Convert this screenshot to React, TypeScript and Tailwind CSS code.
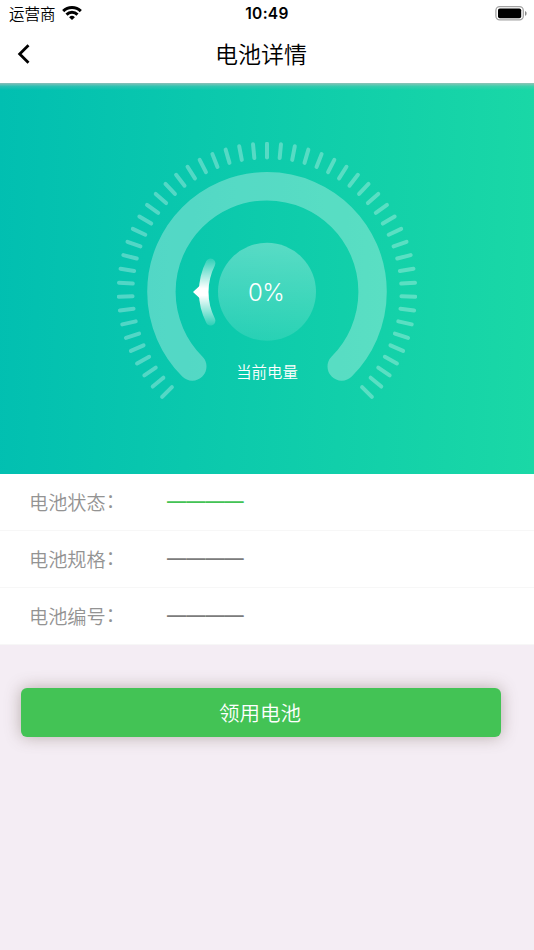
const CENTER = 150;

// 51 marks spread over 270 degrees, open at the bottom
const ticks = Array.from({ length: 51 }, (_, i) => (i - 25) * 5.4);

const rows = [
  { label: "电池状态", value: "————", color: "text-[#43c355]" },
  { label: "电池规格", value: "————", color: "text-[#7c7c7c]" },
  { label: "电池编号", value: "————", color: "text-[#7c7c7c]" },
];

function StatusBar() {
  return (
    <div className="grid h-[27px] grid-cols-3 items-center pl-[9px] pr-[7px]">
      <div className="flex items-center gap-[6px]">
        <span className="text-[15.5px] font-[350] leading-none">运营商</span>
        <svg width="20" height="15" viewBox="0 0 20 15" fill="none" stroke="#000" strokeWidth="3">
          <path d="M1.2 5.1a12.6 12.6 0 0 1 17.6 0" />
          <path d="M4.5 8.6a7.9 7.9 0 0 1 11 0" />
          <path d="M10 14.1l-2.9-2.9a4.1 4.1 0 0 1 5.8 0z" fill="#000" stroke="none" />
        </svg>
      </div>
      <span className="-ml-[2px] pt-px text-center font-['Inter','Noto_Sans_CJK_SC',sans-serif] text-[15.5px] font-semibold leading-none tracking-[0.3px]">
        10:49
      </span>
      <svg className="justify-self-end" width="32" height="15" viewBox="0 0 32 15">
        <rect x="0.9" y="0.7" width="27.4" height="13.2" rx="3.8" fill="none" stroke="#a3a3a3" strokeWidth="1.3" />
        <rect x="3" y="2.4" width="23.2" height="9.8" rx="1.8" fill="#000" />
        <path d="M30 5v4.8c1-.4 1.6-1.3 1.6-2.4s-.6-2-1.6-2.4z" fill="#8c8c8c" />
      </svg>
    </div>
  );
}

function Gauge({ percent }: { percent: number }) {
  return (
    <div className="relative mx-auto h-[300px] w-[300px]">
      <svg width="300" height="300" viewBox="0 0 300 300" fill="none">
        <defs>
          <linearGradient id="disc" x1="0" y1="0" x2="0" y2="1">
            <stop offset="0" stopColor="#fff" stopOpacity="0.31" />
            <stop offset="1" stopColor="#fff" stopOpacity="0.11" />
          </linearGradient>
          <linearGradient id="pointer" gradientUnits="userSpaceOnUse" x1="0" y1="116" x2="0" y2="184">
            <stop offset="0" stopColor="#fff" stopOpacity="0.12" />
            <stop offset="0.45" stopColor="#fff" />
            <stop offset="0.55" stopColor="#fff" />
            <stop offset="1" stopColor="#fff" stopOpacity="0.12" />
          </linearGradient>
        </defs>
        <g stroke="#fff" strokeOpacity="0.3" strokeWidth="4" strokeLinecap="round">
          {ticks.map((angle) => (
            <line key={angle} x1="150" y1="1.7" x2="150" y2="15.5" transform={`rotate(${angle} ${CENTER} ${CENTER})`} />
          ))}
        </g>
        <path
          d="M75.3 224.5A105.6 105.6 0 1 1 224.7 224.5"
          stroke="#fff"
          strokeOpacity="0.3"
          strokeWidth="28.4"
          strokeLinecap="round"
        />
        <circle cx="150" cy="149.8" r="49" fill="url(#disc)" />
        <path d="M93.6 121.3A63.3 63.3 0 0 0 93.6 178.7" stroke="url(#pointer)" strokeWidth="9.6" strokeLinecap="round" />
        <path d="M76 150l7-6.4v12.8z" fill="#fff" />
      </svg>
      <div className="absolute inset-0 flex items-center justify-center pr-[2px] pt-px font-['Inter',sans-serif] text-[24px] font-light leading-none tracking-[-0.7px] text-white">
        {percent}%
      </div>
      <div className="absolute inset-x-0 top-[221px] text-center text-[15.4px] font-[350] leading-[16px] text-white">当前电量</div>
    </div>
  );
}

export default function App() {
  return (
    <div className="flex h-[950px] w-full flex-col bg-[#f4edf4] font-['Noto_Sans_CJK_SC',sans-serif] text-black">
      <header className="h-[83px] bg-white">
        <StatusBar />
        <div className="grid h-[54px] grid-cols-3 items-center">
          <svg className="ml-[17px]" width="14" height="20" viewBox="0 0 14 20" fill="none" stroke="#000" strokeWidth="2.8">
            <path d="M11.5 1.3L2.7 10l8.8 8.7" />
          </svg>
          <h1 className="pb-[2px] pr-[12px] text-center text-[23px] font-[350] leading-none">电池详情</h1>
        </div>
      </header>

      <section className="h-[390.7px] bg-[linear-gradient(92deg,#01bfb1,#1ad8a6)]">
        <div className="h-[7px] bg-linear-to-b from-[#bcbcbc]/75 via-[#bcbcbc]/20 to-transparent" />
        <div className="pt-[52px]">
          <Gauge percent={0} />
        </div>
      </section>

      <section className="bg-white">
        {rows.map((row) => (
          <div key={row.label} className="flex h-[57.15px] items-center border-b border-[#f7f7f7] pl-[29px] text-[19.2px] leading-none">
            <div className="flex w-[138px] pt-px font-[350] text-[#939393]">
              <span>{row.label}</span>
              <span className="-mt-[2px]">：</span>
            </div>
            <span className={`pb-[3px] font-['Liberation_Sans',sans-serif] font-bold ${row.color}`}>{row.value}</span>
          </div>
        ))}
      </section>

      <button className="ml-[21px] mt-[43px] h-[49px] w-[480px] rounded-[6px] bg-[#43c355] pb-px pr-[2px] text-[20.5px] font-[350] leading-none text-white shadow-[0_0_16px_rgba(100,80,70,0.42)]">
        领用电池
      </button>
    </div>
  );
}
